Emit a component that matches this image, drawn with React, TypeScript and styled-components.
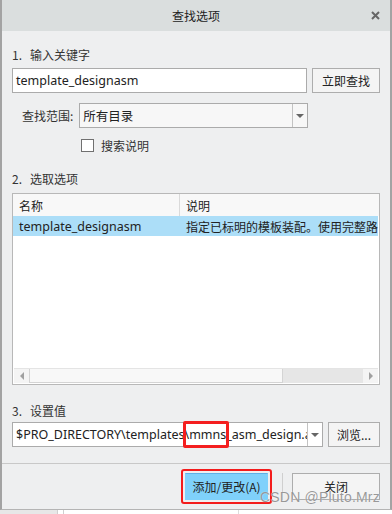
import { FC } from "react";
import styled, { createGlobalStyle } from "styled-components";

const GlobalStyle = createGlobalStyle`
  html, body {
    margin: 0;
    padding: 0;
    background: #ffffff;
  }
  body {
    font-family: "Noto Sans", "Noto Sans CJK SC", sans-serif;
    font-size: 12px;
    color: #333;
  }
  * {
    box-sizing: border-box;
  }
`;

const Screen = styled.div`
  position: relative;
  width: 392px;
  height: 514px;
  overflow: hidden;
  display: flex;
  flex-direction: column;
`;

const Window = styled.div`
  width: 392px;
  height: 510px;
  display: flex;
  flex-direction: column;
  background: #eeeff0;
  border: 2px solid #a3a3a3;
  border-top: none;
  border-bottom: 1px solid #b4b4b4;
`;

const TitleBar = styled.div`
  position: relative;
  height: 31px;
  flex-shrink: 0;
  display: flex;
  align-items: center;
  justify-content: center;
  background: #dadede;
  font-family: "Noto Sans CJK SC", sans-serif;
  font-size: 12px;
  color: #222;
`;

const CloseIcon = styled.svg`
  position: absolute;
  right: 10px;
  top: 11px;
`;

const Body = styled.div`
  flex: 1;
  display: flex;
  flex-direction: column;
  padding: 0 10px 0 10px;
`;

const SectionLabel = styled.div<{ $top: number }>`
  margin-top: ${(p) => p.$top}px;
  height: 16px;
  line-height: 16px;
  display: flex;
  color: #333;
  font-family: "Noto Sans CJK SC", sans-serif;
  span:first-child {
    width: 18px;
  }
`;

const Row = styled.div<{ $top: number }>`
  margin-top: ${(p) => p.$top}px;
  display: flex;
  align-items: center;
  gap: 5px;
`;

const TextBox = styled.div<{ $width: number }>`
  width: ${(p) => p.$width}px;
  height: 25px;
  background: #fff;
  border: 1px solid #ababab;
  display: flex;
  align-items: center;
  padding-left: 3px;
  font-size: 12.5px;
  color: #222;
  white-space: nowrap;
  overflow: hidden;
`;

const Button = styled.button<{ $width: number; $height?: number; $primary?: boolean }>`
  width: ${(p) => p.$width}px;
  height: ${(p) => p.$height ?? 25}px;
  padding: 0;
  background: ${(p) => (p.$primary ? "#7fd1fb" : "#f4f4f4")};
  border: 1px solid ${(p) => (p.$primary ? "#7fd1fb" : "#adadad")};
  border-top-color: ${(p) => (p.$primary ? "#5fb0e6" : "#adadad")};
  font-family: "Noto Sans CJK SC", sans-serif;
  font-size: 12px;
  color: #222;
  display: flex;
  align-items: center;
  justify-content: center;
`;

const Combo = styled.div<{ $width: number; $tinted?: boolean }>`
  position: relative;
  width: ${(p) => p.$width}px;
  height: 25px;
  display: flex;
  background: ${(p) => (p.$tinted ? "#f7f7f7" : "#fff")};
  border: 1px solid #ababab;
  font-size: 12.5px;
  color: #222;
`;

const ComboText = styled.div<{ $cjk?: boolean }>`
  flex: 1;
  display: flex;
  align-items: center;
  padding-left: 3px;
  white-space: nowrap;
  overflow: hidden;
  font-family: ${(p) => (p.$cjk ? "'Noto Sans CJK SC'" : "'Noto Sans', 'Noto Sans CJK SC'")}, sans-serif;
`;

const ComboArrow = styled.div`
  width: 15px;
  border-left: 1px solid #c3c3c3;
  display: flex;
  align-items: center;
  justify-content: center;
  &::after {
    content: "";
    border-left: 4px solid transparent;
    border-right: 4px solid transparent;
    border-top: 4px solid #666;
  }
`;

/* red annotation box drawn over the combo text */
const Annotation = styled.div<{ $left: number; $width: number }>`
  position: absolute;
  left: ${(p) => p.$left}px;
  width: ${(p) => p.$width}px;
  top: -2px;
  height: 27px;
  border: 3px solid #f41f1f;
  border-radius: 2px;
  pointer-events: none;
`;

const ScopeLabel = styled.div`
  margin-left: 10px;
  margin-right: 1px;
  font-family: "Noto Sans CJK SC", sans-serif;
  color: #333;
`;

const CheckRow = styled.div`
  margin-top: 9px;
  height: 16px;
  display: flex;
  align-items: center;
  padding-left: 69px;
  gap: 7px;
  font-family: "Noto Sans CJK SC", sans-serif;
  color: #333;
`;

const CheckBox = styled.span`
  width: 13px;
  height: 13px;
  background: #fff;
  border: 1px solid #707070;
`;

const Table = styled.div`
  margin-top: 6px;
  width: 368px;
  height: 192px;
  background: #fff;
  border: 1px solid #b8b8b8;
  display: flex;
  flex-direction: column;
`;

const TableRow = styled.div<{ $header?: boolean; $selected?: boolean }>`
  height: ${(p) => (p.$header ? 22 : 20)}px;
  display: grid;
  grid-template-columns: 167px 1fr;
  background: ${(p) => (p.$header ? "#f8f8f8" : p.$selected ? "#acdef8" : "#fff")};
  margin-right: ${(p) => (p.$selected ? 1 : 0)}px;
  color: #222;
`;

const Cell = styled.div<{ $divider?: boolean; $cjk?: boolean }>`
  display: flex;
  align-items: center;
  padding-left: 6px;
  white-space: nowrap;
  overflow: hidden;
  border-right: ${(p) => (p.$divider ? "1px solid #dadada" : "none")};
  font-family: ${(p) => (p.$cjk ? "'Noto Sans CJK SC'" : "'Noto Sans', 'Noto Sans CJK SC'")}, sans-serif;
  font-size: ${(p) => (p.$cjk ? 12 : 12.5)}px;
`;

const TableFill = styled.div`
  flex: 1;
`;

const ScrollBar = styled.div`
  height: 15px;
  margin: 0 1px 1px 1px;
  display: flex;
  background: #f0f0f0;
  border-top: 1px solid #e4e4e4;
`;

const ScrollArrow = styled.div<{ $dir: "left" | "right" }>`
  width: 15px;
  display: flex;
  align-items: center;
  justify-content: center;
  background: #f4f4f4;
  &::after {
    content: "";
    border-top: 4px solid transparent;
    border-bottom: 4px solid transparent;
    ${(p) => (p.$dir === "left" ? "border-right: 4px solid #a0a0a0;" : "border-left: 4px solid #a0a0a0;")}
  }
`;

const ScrollThumb = styled.div`
  width: 254px;
  background: #f8f8f8;
  border: 1px solid #d4d4d4;
  border-top: none;
`;

const ScrollTrack = styled.div`
  flex: 1;
  background: #e6e6e6;
`;

const Footer = styled.div`
  height: 46px;
  flex-shrink: 0;
  border-top: 1px solid #c8c8c8;
  display: flex;
  align-items: flex-start;
  justify-content: flex-end;
  padding: 9px 10px 0 0;
`;

const PrimaryWrap = styled.div`
  padding: 2px;
  border: 2px solid #f31c1c;
  border-radius: 3px;
  margin-top: -4px;
`;

const Divider = styled.div`
  width: 1px;
  height: 27px;
  background: #cfcfcf;
  margin: 0 9px 0 10px;
`;

const DesktopStrip = styled.div`
  flex: 1;
  display: flex;
  background: #fff;
  div:first-child {
    width: 58px;
    background: #e7e7e7;
    border-right: 1px solid #cfcfcf;
  }
  div:nth-child(2) {
    width: 6px;
    border-right: 1px solid #cfcfcf;
  }
  div:nth-child(3) {
    width: 175px;
    border-right: 1px solid #dcdcdc;
  }
`;

const Watermark = styled.div`
  position: absolute;
  left: 260px;
  top: 489px;
  font-family: "Liberation Sans", sans-serif;
  font-size: 14px;
  color: rgba(120, 120, 120, 0.75);
  text-shadow: 0 0 1px rgba(255, 255, 255, 0.9);
  letter-spacing: 0.2px;
`;

const App: FC = () => {
  return (
    <Screen>
      <GlobalStyle />
      <Window>
        <TitleBar>
          查找选项
          <CloseIcon width="9" height="9" viewBox="0 0 9 9">
            <path d="M1 1 L8 8 M8 1 L1 8" stroke="#666" strokeWidth="2" />
          </CloseIcon>
        </TitleBar>
        <Body>
          <SectionLabel $top={16}>
            <span>1.</span>
            <span>输入关键字</span>
          </SectionLabel>
          <Row $top={5}>
            <TextBox $width={296}>template_designasm</TextBox>
            <Button $width={68}>立即查找</Button>
          </Row>
          <Row $top={10}>
            <ScopeLabel>查找范围:</ScopeLabel>
            <Combo $width={229} $tinted>
              <ComboText $cjk>所有目录</ComboText>
              <ComboArrow />
            </Combo>
          </Row>
          <CheckRow>
            <CheckBox />
            搜索说明
          </CheckRow>
          <SectionLabel $top={18}>
            <span>2.</span>
            <span>选取选项</span>
          </SectionLabel>
          <Table>
            <TableRow $header>
              <Cell $divider $cjk>名称</Cell>
              <Cell $cjk>说明</Cell>
            </TableRow>
            <TableRow $selected>
              <Cell>template_designasm</Cell>
              <Cell $cjk>指定已标明的模板装配。使用完整路径</Cell>
            </TableRow>
            <TableFill />
            <ScrollBar>
              <ScrollArrow $dir="left" />
              <ScrollThumb />
              <ScrollTrack />
              <ScrollArrow $dir="right" />
            </ScrollBar>
          </Table>
          <SectionLabel $top={18}>
            <span>3.</span>
            <span>设置值</span>
          </SectionLabel>
          <Row $top={3}>
            <Combo $width={311}>
              <ComboText>$PRO_DIRECTORY\templates\mmns_asm_design.asm</ComboText>
              <ComboArrow />
              <Annotation $left={170} $width={46} />
            </Combo>
            <Button $width={53}>浏览...</Button>
          </Row>
        </Body>
        <Footer>
          <PrimaryWrap>
            <Button $width={83} $height={27} $primary>
              添加/更改(A)
            </Button>
          </PrimaryWrap>
          <Divider />
          <Button $width={88} $height={27}>
            关闭
          </Button>
        </Footer>
      </Window>
      <DesktopStrip>
        <div />
        <div />
        <div />
      </DesktopStrip>
      <Watermark>CSDN @Pluto.Mrz</Watermark>
    </Screen>
  );
};

export default App;
